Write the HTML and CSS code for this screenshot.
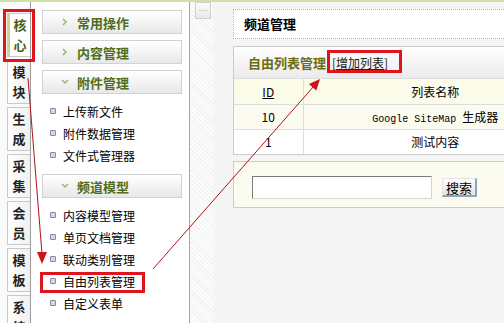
FILE: index.html
```html
<!DOCTYPE html>
<html lang="zh-CN">
<head>
    <meta charset="UTF-8">
    <meta name="viewport" content="width=device-width, initial-scale=1.0">
    <title>频道管理</title>
    <link rel="stylesheet" href="styles.css">
</head>
<body>
    <div class="topline"></div>
    <div class="frame">
        <ul class="tabs">
            <li class="tab active"><span>核</span><span>心</span></li>
            <li class="tab"><span>模</span><span>块</span></li>
            <li class="tab"><span>生</span><span>成</span></li>
            <li class="tab"><span>采</span><span>集</span></li>
            <li class="tab"><span>会</span><span>员</span></li>
            <li class="tab"><span>模</span><span>板</span></li>
            <li class="tab"><span>系</span><span>统</span></li>
        </ul>

        <div class="menu">
            <div class="menu-head">
                <svg class="chev" width="8" height="8" viewBox="0 0 8 8"><polyline points="2,1 5,4 2,7"/></svg>常用操作
            </div>
            <div class="menu-head">
                <svg class="chev" width="8" height="8" viewBox="0 0 8 8"><polyline points="2,1 5,4 2,7"/></svg>内容管理
            </div>
            <div class="menu-head">
                <svg class="chev" width="8" height="8" viewBox="0 0 8 8"><polyline points="1,2 4,5 7,2"/></svg>附件管理
            </div>
            <ul class="menu-list">
                <li class="menu-item"><i class="dot"></i>上传新文件</li>
                <li class="menu-item"><i class="dot"></i>附件数据管理</li>
                <li class="menu-item"><i class="dot"></i>文件式管理器</li>
            </ul>
            <div class="menu-head">
                <svg class="chev" width="8" height="8" viewBox="0 0 8 8"><polyline points="1,2 4,5 7,2"/></svg>频道模型
            </div>
            <ul class="menu-list">
                <li class="menu-item"><i class="dot"></i>内容模型管理</li>
                <li class="menu-item"><i class="dot"></i>单页文档管理</li>
                <li class="menu-item"><i class="dot"></i>联动类别管理</li>
                <li class="menu-item"><i class="dot"></i>自由列表管理</li>
                <li class="menu-item"><i class="dot"></i>自定义表单</li>
            </ul>
        </div>

        <div class="splitter">
            <div class="toggle"><span></span></div>
        </div>

        <div class="main">
            <div class="page-title">频道管理</div>

            <div class="panel">
                <div class="panel-head">
                    <span class="panel-title">自由列表管理</span>
                    <a href="#" class="add-link">[<u>增加列表</u>]</a>
                </div>
                <table class="list-table">
                    <tr class="head-row">
                        <th class="col-id"><u>ID</u></th>
                        <th>列表名称</th>
                    </tr>
                    <tr class="row-alt">
                        <td class="col-id">10</td>
                        <td><span class="mono">Google SiteMap </span>生成器</td>
                    </tr>
                    <tr>
                        <td class="col-id">1</td>
                        <td>测试内容</td>
                    </tr>
                </table>
            </div>

            <form class="search-panel">
                <input type="text" class="search-input">
                <button type="button" class="search-button">搜索</button>
            </form>
        </div>
    </div>

    <!-- annotation marks drawn over the screenshot -->
    <svg class="marks" width="504" height="323" viewBox="0 0 504 323">
        <g class="box">
            <rect x="4.5" y="10.5" width="29" height="50"/>
            <rect x="41.5" y="273.5" width="102" height="18"/>
            <rect x="328.5" y="51.5" width="72" height="20"/>
        </g>
        <g class="arrow">
            <line x1="28" y1="78" x2="42" y2="254"/>
            <polygon points="42,264 37,252 47,252"/>
            <line x1="153" y1="269" x2="314" y2="86"/>
            <polygon points="320,79 316.3,90.5 308.9,83.9"/>
        </g>
    </svg>
</body>
</html>
```

FILE: styles.css
```css
* {
    margin: 0;
    padding: 0;
    box-sizing: border-box;
}

body {
    position: relative;
    width: 504px;
    height: 323px;
    overflow: hidden;
    background-color: #f5f5f5;
    font-family: "Noto Sans CJK SC", sans-serif;
    font-size: 12px;
    color: #000;
}

.topline {
    height: 2px;
    background-color: #cfe0a8;
}

.frame {
    display: flex;
    height: 321px;
}

.frame > * {
    flex: none;
}

/* left vertical tabs */
.tabs {
    list-style: none;
    width: 31px;
    padding: 11px 0 0 7px;
    border-right: 1px solid #9c9c9c;
    background-color: #fafafa;
}

.tab {
    display: flex;
    flex-direction: column;
    align-items: center;
    justify-content: center;
    height: 44px;
    margin-bottom: 3px;
    border: 1px solid #c9c9c9;
    border-right: 0;
    background: linear-gradient(to right, #ffffff, #f0f0f0);
    font-size: 13px;
    font-weight: bold;
    line-height: 20px;
    color: #222;
}

.tab.active {
    border-left: 3px solid #c2d78c;
    background: #fff;
    color: #4a5d14;
}

/* menu column */
.menu {
    width: 158px;
    padding: 8px 0 0 11px;
    background-color: #fff;
}

.menu-head {
    display: flex;
    align-items: center;
    width: 140px;
    height: 24px;
    margin-bottom: 6px;
    padding-left: 18px;
    border: 1px solid #d2d2d2;
    background: linear-gradient(#ffffff, #e8e8e8);
    font-size: 13px;
    font-weight: bold;
    color: #4e6e1e;
}

.chev {
    margin-right: 8px;
    fill: none;
    stroke: #98b770;
    stroke-width: 1.5;
}

.menu-list {
    list-style: none;
    padding-bottom: 8px;
}

.menu-item {
    display: flex;
    align-items: center;
    height: 22px;
    padding-left: 8px;
}

.dot {
    width: 6px;
    height: 6px;
    margin-right: 7px;
    border: 1px solid #7d8ba3;
    border-radius: 1px;
    background-color: #d3d9e4;
}

/* hatched splitter */
.splitter {
    width: 24px;
    border-left: 1px solid #a5a5a5;
    background: repeating-linear-gradient(45deg, #f1f1f1 0 1px, #fcfcfc 1px 3px);
}

.toggle {
    display: flex;
    align-items: center;
    justify-content: center;
    width: 16px;
    height: 17px;
    margin-left: 5px;
    border: 1px solid #d0d0d0;
    background: linear-gradient(#fbfbfb, #e9e9e9);
}

.toggle span {
    width: 8px;
    height: 1px;
    background-color: #d8d8d8;
}

/* main area */
.main {
    width: 360px;
    padding: 7px 0 0 20px;
}

.page-title {
    width: 335px;
    height: 30px;
    margin-bottom: 7px;
    padding-left: 10px;
    border: 1px dotted #b5b5b5;
    background-color: #fff;
    font-size: 13px;
    font-weight: bold;
    line-height: 28px;
}

.panel {
    width: 335px;
    border: 1px solid #cccccc;
    background-color: #fff;
}

.panel-head {
    display: flex;
    align-items: center;
    height: 32px;
    padding-left: 14px;
    border-bottom: 1px solid #dddddd;
    background: linear-gradient(#ffffff, #ebebeb);
}

.panel-title {
    font-size: 13px;
    font-weight: bold;
    color: #6b6b12;
}

.add-link {
    margin-left: 6px;
    color: #222;
    text-decoration: none;
}

.list-table {
    width: 100%;
    border-collapse: collapse;
}

.list-table th,
.list-table td {
    height: 25px;
    border-bottom: 1px solid #dddddd;
    font-weight: normal;
    text-align: center;
}

.list-table tr:last-child td {
    border-bottom: 0;
}

.list-table .col-id {
    width: 69px;
    border-right: 1px solid #dddddd;
}

.head-row {
    background-color: #fbfbe9;
}

.row-alt {
    background-color: #fbfbef;
}

.mono {
    font-family: "Liberation Mono", monospace;
    font-size: 10px;
    white-space: pre;
}

.search-panel {
    display: flex;
    align-items: center;
    width: 335px;
    height: 47px;
    margin-top: 6px;
    padding: 14px 0 8px 18px;
    border: 1px solid #cccccc;
    background-color: #fbfbef;
}

.search-input {
    width: 180px;
    height: 23px;
    border: 1px solid;
    border-color: #7b7b7b #d4d4d4 #d4d4d4 #7b7b7b;
    background-color: #fff;
}

.search-button {
    width: 35px;
    height: 19px;
    margin-left: 10px;
    border-style: solid;
    border-width: 1px 2px 2px 1px;
    border-color: #e5e5e5 #8fa3bd #8fa3bd #e5e5e5;
    background: linear-gradient(#fdfdfd, #e4e4e4);
    font-family: "Noto Sans CJK SC", sans-serif;
    font-size: 13px;
    line-height: 15px;
}

/* annotation overlay */
.marks {
    position: absolute;
    top: 0;
    left: 0;
    pointer-events: none;
}

.marks .box rect {
    fill: none;
    stroke: #e0141c;
    stroke-width: 3;
}

.marks .arrow line {
    stroke: #b0101c;
    stroke-width: 1;
}

.marks .arrow polygon {
    fill: #d0101c;
}
```
